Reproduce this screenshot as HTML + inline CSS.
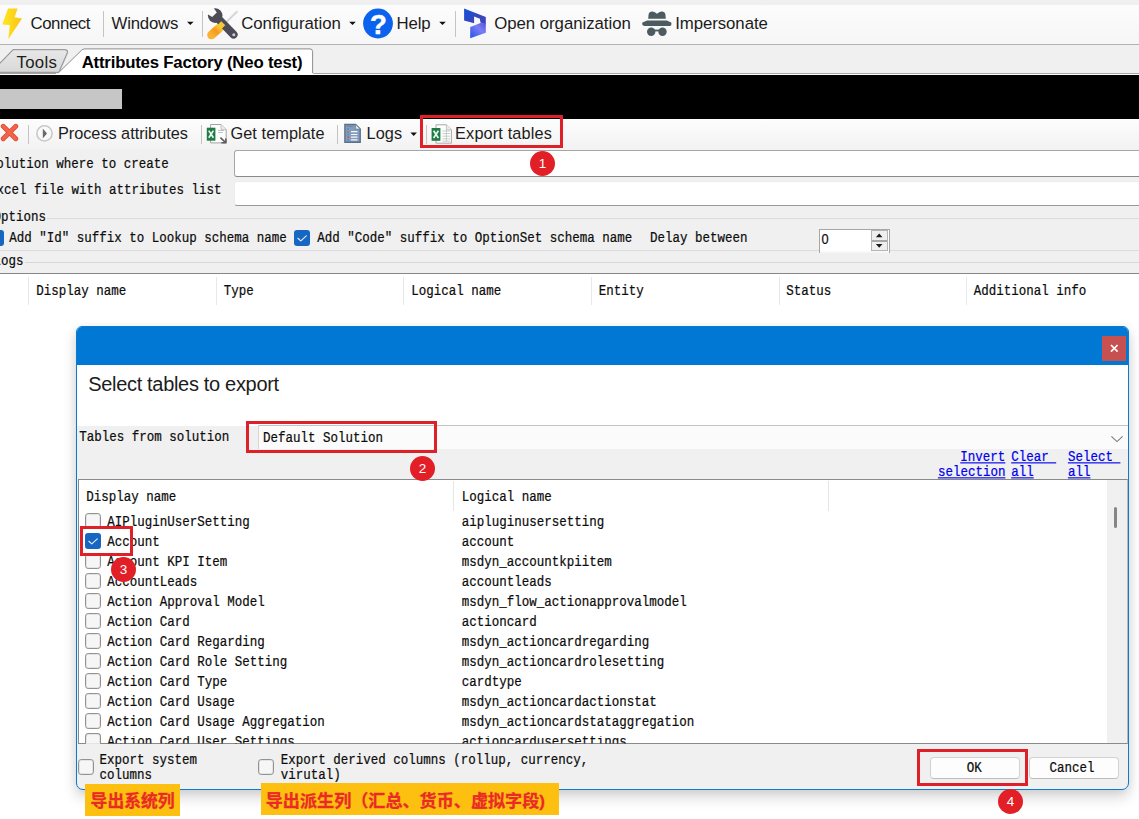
<!DOCTYPE html>
<html lang="en"><head><meta charset="utf-8"><title>Attributes Factory - Export tables</title>
<style>
*{box-sizing:border-box;margin:0;padding:0}
html,body{width:1139px;height:819px;overflow:hidden;background:#fff}
body{position:relative;font-family:"Liberation Sans",sans-serif;color:#1a1a1a}
.a{position:absolute}
.t{position:absolute;white-space:pre;line-height:1}
.ui{font-family:"Liberation Sans",sans-serif;color:#1c1c1c}
.b{font-weight:bold}
.m{font-family:"Liberation Mono","Noto Sans CJK SC",monospace;font-size:12.5px;color:#0c0c0c;transform:scaleY(1.13);-webkit-text-stroke:0.2px #0c0c0c;transform-origin:0 0}
.u{-webkit-text-stroke-color:#0000ee !important;text-decoration:underline;text-decoration-thickness:1.4px;text-underline-offset:1.4px}
.cb{position:absolute;width:16px;height:16px;border:1px solid #929292;border-radius:3.2px;background:#f6f6f6;box-shadow:inset 0 0 0 1px rgba(0,0,0,.07)}
.cbc{position:absolute;width:16px;height:16px;border-radius:3px;background:#1767c2}
.sep{position:absolute;width:1px;background:#c4c4c4}
.badge{position:absolute;width:25px;height:25px;border-radius:50%;background:#e21f26;color:#fff;font-family:"Liberation Sans",sans-serif;font-size:13.5px;line-height:25.4px;text-align:center}
.rb{position:absolute;border:3px solid #de2029}
.btn{position:absolute;background:#fdfdfd;border:1px solid #d2d2d2;border-bottom-color:#bdbdbd;border-radius:4px}
.yl{position:absolute;background:#fdc010;color:#ea2a26;font-family:"Liberation Sans","Noto Sans CJK SC",sans-serif;font-weight:bold;font-size:16.8px;line-height:1;white-space:nowrap;-webkit-text-stroke:0.3px #ea2a26}
</style></head><body>
<!-- ===== main window: top toolbar ===== -->
<div class="a" style="left:0;top:0;width:1139px;height:5px;background:#f0f0f0"></div>
<div class="a" style="left:0;top:5px;width:1139px;height:39px;background:linear-gradient(#fcfcfc,#f6f6f6)"></div>
<div class="a" style="left:0;top:43.5px;width:1139px;height:1.2px;background:#b2b2b2"></div>
<div class="sep" style="left:102.5px;top:11px;height:26px"></div>
<div class="sep" style="left:202px;top:11px;height:26px"></div>
<div class="sep" style="left:455px;top:11px;height:26px"></div>
<!-- dropdown arrows -->
<svg class="a" style="left:0;top:0" width="1139" height="160" viewBox="0 0 1139 160">
<defs>
<linearGradient id="gBolt" x1="0" y1="0" x2="1" y2="0"><stop offset="0" stop-color="#fde81f"/><stop offset="1" stop-color="#fcc419"/></linearGradient>
<linearGradient id="gHandle" x1="0" y1="1" x2="1" y2="0"><stop offset="0" stop-color="#f9b233"/><stop offset=".45" stop-color="#f59a1d"/><stop offset="1" stop-color="#fcd93a"/></linearGradient>
<linearGradient id="gDynA" x1="0" y1="0" x2="1" y2="1"><stop offset="0" stop-color="#1452d9"/><stop offset="1" stop-color="#4a3fb0"/></linearGradient>
<linearGradient id="gDynB" x1="0" y1="1" x2="1" y2="0"><stop offset="0" stop-color="#2352e4"/><stop offset=".6" stop-color="#7d7df5"/><stop offset="1" stop-color="#4f55e0"/></linearGradient>
</defs>
<path d="M187 21.7h6.6l-3.3 3.3z M349.2 21.7h6.6l-3.3 3.3z M439.2 21.7h6.6l-3.3 3.3z" fill="#111"/>
<!-- lightning bolt -->
<path d="M8 8.6 L17.6 8.6 L14.6 17.2 L22 18.4 L8.3 39.2 L9.8 25 L2.2 24.5 Z" fill="url(#gBolt)"/>
<!-- wrench + screwdriver -->
<line x1="224" y1="24.5" x2="236.8" y2="11.8" stroke="#d6d6d6" stroke-width="2" stroke-linecap="round"/>
<line x1="211.5" y1="35" x2="221.5" y2="26" stroke="url(#gHandle)" stroke-width="8.6" stroke-linecap="round"/>
<line x1="218.5" y1="19" x2="233.6" y2="34.6" stroke="#4c4c56" stroke-width="8" stroke-linecap="round"/>
<circle cx="215.2" cy="15.6" r="7.3" fill="#4c4c56"/>
<path d="M206 13.2 L212.6 6.4 L216.8 12.4 L212.2 17 Z" fill="#f9f9f9"/>
<circle cx="233.8" cy="34.8" r="1.5" fill="#cfcfd3"/>
<path d="M219.5 23 l4 4" stroke="#f4c93a" stroke-width="5" />
<!-- help -->
<circle cx="378" cy="23.5" r="14.9" fill="#0b62ee"/>
<text x="378.4" y="33.6" text-anchor="middle" font-family="Liberation Sans, sans-serif" font-weight="bold" font-size="27.5" fill="#fff" stroke="#fff" stroke-width=".5">?</text>
<!-- dynamics -->
<path d="M464.1 8.6 L485.8 16.9 L485.8 24.5 L480.4 22.6 L479.9 18.7 L474.1 16.5 L474.1 23.3 L464.1 20.4 Z" fill="url(#gDynA)"/>
<path d="M485.8 23.2 L485.8 32.8 L470.2 38.2 L470.2 27 L480.6 23 Z" fill="url(#gDynB)"/>
<!-- incognito -->
<g fill="#4b5b60">
<path d="M648.2 18.7 L648.6 14.2 Q649.4 11.2 652.5 11.4 Q655 11.8 657 13.8 Q659 11.8 661.5 11.4 Q664.6 11.2 665.4 14.2 L665.8 18.7 Z"/>
<path d="M647.2 20.4 H666.8 L671.2 22.4 Q672.2 25.8 669.5 26 H644.4 Q641.6 25.8 642.4 22.6 Z"/>
<circle cx="651.2" cy="31.8" r="4.2"/><circle cx="662.5" cy="31.8" r="4.2"/>
<rect x="654" y="29.6" width="6" height="1.8"/>
</g>
<!-- toolbar 2 icons drawn later (above toolbar bg) -->
</svg>
<!-- ===== tab strip ===== -->
<div class="a" style="left:0;top:44.7px;width:1139px;height:28px;background:#f0f0f0"></div>
<div class="a" style="left:0;top:72.5px;width:1139px;height:1px;background:#a6a6a6"></div>
<div class="a" style="left:0;top:73.5px;width:1139px;height:1.5px;background:#fcfcfc"></div>
<svg class="a" style="left:0;top:44px" width="330" height="32" viewBox="0 44 330 32">
<defs><linearGradient id="gTab" x1="0" y1="0" x2="0" y2="1"><stop offset="0" stop-color="#e8e8e8"/><stop offset="1" stop-color="#d8d8d8"/></linearGradient></defs>
<path d="M-2 65.2 L13.2 49.6 L64.2 49.6 Q68.2 49.6 67.3 53 L58.8 72.5 L-2 72.5 Z" fill="url(#gTab)" stroke="#9c9c9c" stroke-width="1.3"/>
<path d="M56.2 75 L81.4 50.4 Q82.8 48.9 84.8 48.9 L310 48.9 Q312.6 48.9 312.6 51.5 L312.6 75 Z" fill="#fff" stroke="#8e8e8e" stroke-width="1"/>
<rect x="56" y="73.2" width="257.4" height="3" fill="#fff"/>
</svg>
<!-- ===== black band ===== -->
<div class="a" style="left:0;top:75px;width:1139px;height:43.6px;background:#000"></div>
<div class="a" style="left:0;top:89px;width:122px;height:19.5px;background:#c6c6c6"></div>
<!-- ===== toolbar 2 ===== -->
<div class="a" style="left:0;top:118.6px;width:1139px;height:31.4px;background:linear-gradient(#fdfdfd,#f2f2f2)"></div>
<div class="sep" style="left:28px;top:125px;height:19px"></div>
<div class="sep" style="left:201px;top:125px;height:19px"></div>
<div class="sep" style="left:337px;top:125px;height:19px"></div>
<div class="sep" style="left:426px;top:125px;height:19px"></div>
<svg class="a" style="left:0;top:118px" width="470" height="32" viewBox="0 118 470 32">
<path d="M410.4 132.6h6.6l-3.3 3.4z" fill="#111"/>
<!-- red X -->
<path d="M3.2 126.2 L15.8 138.8 M15.8 126.2 L3.2 138.8" stroke="#dc4a33" stroke-width="4.8" stroke-linecap="round"/>
<path d="M3.2 126.2 L15.8 138.8 M15.8 126.2 L3.2 138.8" stroke="#f5624a" stroke-width="3.2" stroke-linecap="round"/>
<!-- play -->
<circle cx="44.5" cy="133.4" r="7.6" fill="#fafafa" stroke="#c9c9c9" stroke-width="1.6"/>
<path d="M42.8 128.4 L47 133.4 L42.8 138.4 Z" fill="#6a6a6a"/>
<!-- excel: get template -->
<g>
<path d="M210.6 124.5 H221 L226.2 129.7 V142.9 H210.6 Z" fill="#fdfdfd" stroke="#a3a3a3" stroke-width="1"/>
<path d="M221 124.5 V129.7 H226.2" fill="#ececec" stroke="#b5b5b5" stroke-width=".8"/>
<path d="M218 130.5h6 M218 132.5h5" stroke="#b8c2bc" stroke-width=".9"/>
<rect x="206.8" y="127.7" width="8.6" height="13" fill="#1e7b45"/>
<path d="M208.8 130.6 L213.4 137.8 M213.4 130.6 L208.8 137.8" stroke="#e8f6ee" stroke-width="1.7"/>
<path d="M220.4 137.6 L225.4 142.4 M225.8 138.4 V142.8 H221.4" stroke="#5e5e5e" stroke-width="1.6" fill="none"/>
</g>
<!-- logs -->
<g>
<path d="M344.9 124.5 H355.6 L360.2 129.1 V142.3 H344.9 Z" fill="#849dbc" stroke="#5d6f85" stroke-width="1.4"/>
<path d="M355.6 124.5 V129.1 H360.2 Z" fill="#e9eef5" stroke="#66788e" stroke-width=".7"/>
<path d="M351 131.6h6.4 M351 134.5h6.4 M351 137.2h6.4 M351 139.8h6.4" stroke="#f5f8fb" stroke-width="1.2"/>
<path d="M347 126.6h6" stroke="#6f86a3" stroke-width="1"/>
<circle cx="348" cy="129" r=".9" fill="#3e8ede"/><circle cx="348" cy="131.8" r=".9" fill="#d9533b"/><circle cx="348" cy="134.5" r=".9" fill="#3e8ede"/><circle cx="348.2" cy="137.2" r="1" fill="#d9533b"/><circle cx="348" cy="139.9" r=".9" fill="#3e8ede"/>
</g>
<!-- excel: export tables -->
<g>
<path d="M436 124.8 H446.4 L451.4 129.8 V143.2 H436 Z" fill="#fdfdfd" stroke="#a9a9a9" stroke-width="1"/>
<path d="M446.4 124.8 V129.8 H451.4" fill="#ececec" stroke="#b8b8b8" stroke-width=".8"/>
<path d="M442.4 131h7.6 M442.4 133.6h7.6 M442.4 136.2h7.6 M442.4 138.8h7.6 M442.4 141.2h7.6 M446.4 130.4v11" stroke="#b9c4be" stroke-width=".8"/>
<rect x="431.6" y="128" width="8.8" height="12.8" fill="#1e7b45"/>
<path d="M433.6 130.8 L438.4 138 M438.4 130.8 L433.6 138" stroke="#e8f6ee" stroke-width="1.7"/>
</g>
</svg>
<!-- ===== form area ===== -->
<div class="a" style="left:0;top:150px;width:1139px;height:124px;background:#f0f0f0"></div>
<div class="a" style="left:234px;top:150px;width:920px;height:27px;background:#fff;border:1px solid #a6a6a6;border-bottom-color:#8a8a8a;border-radius:3px"></div>
<div class="a" style="left:234px;top:181.2px;width:920px;height:24.4px;background:#fff;border:1px solid #ececec;border-bottom:1px solid #9a9a9a;border-radius:3px"></div>
<!-- group lines -->
<div class="a" style="left:47px;top:218px;width:1100px;height:1px;background:#dcdcdc"></div>
<div class="a" style="left:0;top:250px;width:1139px;height:1px;background:#dcdcdc"></div>
<div class="a" style="left:25px;top:261.6px;width:1120px;height:1px;background:#d8d8d8"></div>
<!-- checkboxes -->
<div class="cbc" style="left:-12.5px;top:230px"></div>
<div class="cbc" style="left:294.4px;top:230px"></div>
<svg class="a" style="left:294.4px;top:230px" width="16" height="16" viewBox="0 0 16 16"><path d="M3.9 8.3 L6.8 10.9 L12.3 5.9" stroke="#e4effa" stroke-width="1.15" fill="none" stroke-linecap="round" stroke-linejoin="round"/></svg>
<!-- numeric up/down -->
<div class="a" style="left:818.8px;top:228.8px;width:71.4px;height:24px;background:linear-gradient(#fff 88%,#f3f3f3);border:1px solid #a6a6a6;border-bottom:none"></div>
<div class="a" style="left:870.6px;top:230.2px;width:17px;height:20.6px;background:#efefef;border:1px solid #b4b4b4"></div>
<div class="a" style="left:871.6px;top:240.4px;width:15px;height:1.2px;background:#a8a8a8"></div>
<svg class="a" style="left:870.6px;top:230px" width="18" height="22" viewBox="0 0 18 22"><path d="M4.9 7.2 L8.2 3.5 L11.5 7.2 Z M4.9 14.1 L8.2 17.8 L11.5 14.1 Z" fill="#1a1a1a"/></svg>
<!-- logs list -->
<div class="a" style="left:-2px;top:272.8px;width:1145px;height:560px;background:#fff;border-top:1px solid #868686"></div>
<div class="a" style="left:28px;top:277px;width:1px;height:28px;background:#e8e8e8"></div>
<div class="a" style="left:215.6px;top:277px;width:1px;height:28px;background:#e8e8e8"></div>
<div class="a" style="left:403px;top:277px;width:1px;height:28px;background:#e8e8e8"></div>
<div class="a" style="left:590.6px;top:277px;width:1px;height:28px;background:#e8e8e8"></div>
<div class="a" style="left:778.6px;top:277px;width:1px;height:28px;background:#e8e8e8"></div>
<div class="a" style="left:966px;top:277px;width:1px;height:28px;background:#e8e8e8"></div>
<!-- ===== dialog ===== -->
<div class="a" style="left:76.4px;top:326px;width:1052.4px;height:464px;background:#f0f0f0;border:1px solid #0a7ad4;border-radius:6px 6px 7px 7px;box-shadow:0 7px 14px rgba(0,0,0,.17),0 1px 8px rgba(0,0,0,.06);overflow:hidden">
  <div class="a" style="left:0;top:0;width:1052px;height:38.1px;background:#0078d4"></div>
  <div class="a" style="left:0;top:38.1px;width:1052px;height:60.5px;background:#fff"></div>
  <div class="a" style="left:1024.6px;top:9.4px;width:24.2px;height:24.2px;background:#c75050"></div>
  <svg class="a" style="left:1024.6px;top:9.4px" width="25" height="25" viewBox="0 0 25 25"><path d="M9 9 L15.6 15.6 M15.6 9 L9 15.6" stroke="#fff" stroke-width="1.7"/></svg>
  <!-- combobox -->
  <div class="a" style="left:181px;top:98px;width:871px;height:23.8px;background:#fbfbfb;border-top:1px solid #c4c4c4;border-left:1px solid #d6d6d6"></div>
  <svg class="a" style="left:1032px;top:107px" width="16" height="10" viewBox="0 0 16 10"><path d="M2.4 2.4 L8 7.6 L13.6 2.4" stroke="#7a7a7a" stroke-width="1.1" fill="none"/></svg>
  <!-- list view -->
  <div class="a" style="left:0.6px;top:152px;width:1050px;height:265px;background:#fff;border:1px solid #8a8a8a;border-right-color:#b9b9b9"></div>
  <div class="a" style="left:376px;top:154px;width:1px;height:30px;background:#e6e6e6"></div>
  <div class="a" style="left:751px;top:154px;width:1px;height:30px;background:#e6e6e6"></div>
  <div class="a" style="left:1029.4px;top:153px;width:20.4px;height:263px;background:#f0f0f0"></div>
  <div class="a" style="left:1036.3px;top:180px;width:3px;height:21px;background:#868686;border-radius:1.5px"></div>
  <div class="btn" style="left:853px;top:430.4px;width:90px;height:22px"></div>
  <div class="btn" style="left:952px;top:430.4px;width:90px;height:22px"></div>
</div>
<span class="t ui" style="left:30.5px;top:16.4px;font-size:16.8px;letter-spacing:-0.417px">Connect</span>
<span class="t ui" style="left:111.6px;top:16.4px;font-size:16.8px;letter-spacing:-0.225px">Windows</span>
<span class="t ui" style="left:241.2px;top:16.4px;font-size:16.8px;letter-spacing:-0.018px">Configuration</span>
<span class="t ui" style="left:396.6px;top:16.4px;font-size:16.8px;letter-spacing:-0.204px">Help</span>
<span class="t ui" style="left:494.2px;top:16.4px;font-size:16.8px;letter-spacing:-0.033px">Open organization</span>
<span class="t ui" style="left:675.2px;top:16.4px;font-size:16.8px;letter-spacing:-0.062px">Impersonate</span>
<span class="t ui" style="left:16.5px;top:55.4px;font-size:16.8px;letter-spacing:0.302px">Tools</span>
<span class="t ui b" style="left:81.7px;top:55.4px;font-size:16.8px;color:#000;letter-spacing:-0.206px">Attributes Factory (Neo test)</span>
<span class="t ui" style="left:58.0px;top:125.2px;font-size:16.3px;letter-spacing:-0.028px">Process attributes</span>
<span class="t ui" style="left:230.5px;top:125.2px;font-size:16.3px;letter-spacing:0.073px">Get template</span>
<span class="t ui" style="left:366.6px;top:125.2px;font-size:16.3px;letter-spacing:0.072px">Logs</span>
<span class="t ui" style="left:455.1px;top:125.2px;font-size:16.3px;letter-spacing:0.144px">Export tables</span>
<span class="t ui" style="left:88.2px;top:374.3px;font-size:20px;letter-spacing:-0.317px">Select tables to export</span>
<span class="t m" style="left:-11.2px;top:157.9px">Solution where to create</span>
<span class="t m" style="left:-11.1px;top:183.8px">Excel file with attributes list</span>
<span class="t m" style="left:-6.5px;top:210.8px">Options</span>
<span class="t m" style="left:9.2px;top:232.3px">Add "Id" suffix to Lookup schema name</span>
<span class="t m" style="left:317.2px;top:232.3px">Add "Code" suffix to OptionSet schema name</span>
<span class="t m" style="left:650.0px;top:231.5px">Delay between</span>
<span class="t m" style="left:821.4px;top:232.5px;font-family:'Liberation Sans',sans-serif;font-size:12.8px">0</span>
<span class="t m" style="left:-6.5px;top:254.6px">Logs</span>
<span class="t m" style="left:36.3px;top:284.8px">Display name</span>
<span class="t m" style="left:223.8px;top:284.8px">Type</span>
<span class="t m" style="left:411.3px;top:284.8px">Logical name</span>
<span class="t m" style="left:598.8px;top:284.8px">Entity</span>
<span class="t m" style="left:786.3px;top:284.8px">Status</span>
<span class="t m" style="left:973.8px;top:284.8px">Additional info</span>
<span class="t m" style="left:79.2px;top:431.1px">Tables from solution</span>
<span class="t m" style="left:263.0px;top:432.1px">Default Solution</span>
<span class="t m" style="left:86.2px;top:491.1px">Display name</span>
<span class="t m" style="left:461.7px;top:491.1px">Logical name</span>
<span class="t m" style="left:107.3px;top:515.8px">AIPluginUserSetting</span>
<span class="t m" style="left:461.8px;top:515.8px">aipluginusersetting</span>
<span class="t m" style="left:107.3px;top:535.8px">Account</span>
<span class="t m" style="left:461.8px;top:535.8px">account</span>
<span class="t m" style="left:107.3px;top:555.8px">Account KPI Item</span>
<span class="t m" style="left:461.8px;top:555.8px">msdyn_accountkpiitem</span>
<span class="t m" style="left:107.3px;top:575.8px">AccountLeads</span>
<span class="t m" style="left:461.8px;top:575.8px">accountleads</span>
<span class="t m" style="left:107.3px;top:595.8px">Action Approval Model</span>
<span class="t m" style="left:461.8px;top:595.8px">msdyn_flow_actionapprovalmodel</span>
<span class="t m" style="left:107.3px;top:615.8px">Action Card</span>
<span class="t m" style="left:461.8px;top:615.8px">actioncard</span>
<span class="t m" style="left:107.3px;top:635.8px">Action Card Regarding</span>
<span class="t m" style="left:461.8px;top:635.8px">msdyn_actioncardregarding</span>
<span class="t m" style="left:107.3px;top:655.8px">Action Card Role Setting</span>
<span class="t m" style="left:461.8px;top:655.8px">msdyn_actioncardrolesetting</span>
<span class="t m" style="left:107.3px;top:675.8px">Action Card Type</span>
<span class="t m" style="left:461.8px;top:675.8px">cardtype</span>
<span class="t m" style="left:107.3px;top:695.8px">Action Card Usage</span>
<span class="t m" style="left:461.8px;top:695.8px">msdyn_actioncardactionstat</span>
<span class="t m" style="left:107.3px;top:715.8px">Action Card Usage Aggregation</span>
<span class="t m" style="left:461.8px;top:715.8px">msdyn_actioncardstataggregation</span>
<span class="t m" style="left:107.3px;top:735.8px;clip-path:inset(0 0 5.8px 0)">Action Card User Settings</span>
<span class="t m" style="left:461.8px;top:735.8px;clip-path:inset(0 0 5.8px 0)">actioncardusersettings</span>
<span class="t m" style="left:99.5px;top:753.8px">Export system</span>
<span class="t m" style="left:99.5px;top:768.6px">columns</span>
<span class="t m" style="left:280.7px;top:753.8px">Export derived columns (rollup, currency,</span>
<span class="t m" style="left:280.7px;top:768.6px">virutal)</span>
<span class="t m" style="left:966.8px;top:762.2px">OK</span>
<span class="t m" style="left:1049.6px;top:762.2px">Cancel</span>
<span class="t m u" style="left:960.3px;top:451.1px;color:#0000ee">Invert</span>
<span class="t m u" style="left:937.9px;top:466.1px;color:#0000ee">selection</span>
<span class="t m u" style="left:1011.2px;top:451.1px;color:#0000ee">Clear </span>
<span class="t m u" style="left:1011.2px;top:466.1px;color:#0000ee">all</span>
<span class="t m u" style="left:1067.9px;top:451.1px;color:#0000ee">Select </span>
<span class="t m u" style="left:1067.9px;top:466.1px;color:#0000ee">all</span>
<!-- list checkboxes -->
<div class="cb" style="left:84.6px;top:512.7px"></div>
<div class="cbc" style="left:84.6px;top:532.8px"></div>
<svg class="a" style="left:84.6px;top:532.8px" width="16" height="16" viewBox="0 0 16 16"><path d="M3.9 8.3 L6.8 10.9 L12.3 5.9" stroke="#e4effa" stroke-width="1.15" fill="none" stroke-linecap="round" stroke-linejoin="round"/></svg>
<div class="cb" style="left:84.6px;top:552.7px"></div>
<div class="cb" style="left:84.6px;top:572.7px"></div>
<div class="cb" style="left:84.6px;top:592.7px"></div>
<div class="cb" style="left:84.6px;top:612.7px"></div>
<div class="cb" style="left:84.6px;top:632.7px"></div>
<div class="cb" style="left:84.6px;top:652.7px"></div>
<div class="cb" style="left:84.6px;top:672.7px"></div>
<div class="cb" style="left:84.6px;top:692.7px"></div>
<div class="cb" style="left:84.6px;top:712.7px"></div>
<div class="cb" style="left:84.6px;top:732.7px;height:11px;border-bottom:none;border-radius:3.5px 3.5px 0 0"></div>
<!-- bottom panel checkboxes + buttons -->
<div class="cb" style="left:78px;top:758.9px"></div>
<div class="cb" style="left:258px;top:758.9px"></div>
<!-- red highlight boxes -->
<div class="rb" style="left:420px;top:115.2px;width:142.6px;height:32.6px"></div>
<div class="rb" style="left:246.1px;top:421px;width:190.8px;height:31.8px"></div>
<div class="rb" style="left:80.3px;top:526.2px;width:52.6px;height:29.4px"></div>
<div class="rb" style="left:917.2px;top:749.2px;width:111.2px;height:37.2px"></div>
<!-- numbered badges -->
<div class="badge" style="left:530.1px;top:150.8px">1</div>
<div class="badge" style="left:410.1px;top:455.9px">2</div>
<div class="badge" style="left:111px;top:556.9px">3</div>
<div class="badge" style="left:997.9px;top:788.9px">4</div>
<!-- yellow annotations -->
<div class="yl" style="left:85px;top:784px;width:95px;height:31.6px;padding:9.8px 0 0 5.6px">导出系统列</div>
<div class="yl" style="left:260.6px;top:783.2px;width:298.2px;height:31.4px;padding:9.8px 0 0 5.2px;font-size:17.1px">导出派生列（汇总、货币、虚拟字段)</div>
</body></html>
